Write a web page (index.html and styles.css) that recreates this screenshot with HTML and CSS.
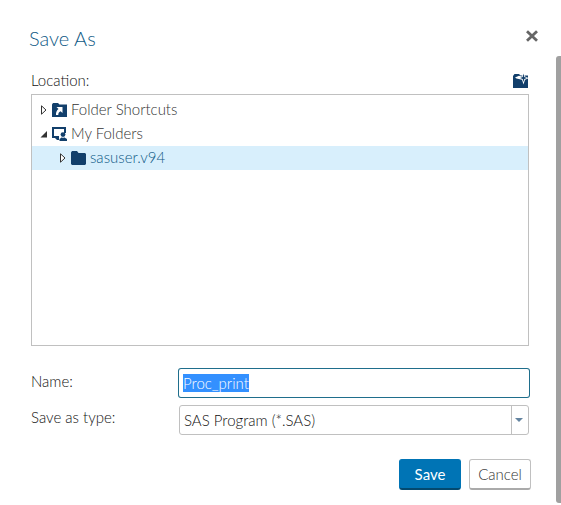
FILE: index.html
```
<!DOCTYPE html>
<html lang="en">

<head>
    <meta charset="UTF-8">
    <meta name="viewport" content="width=device-width, initial-scale=1.0">
    <title>Save As</title>
    <link rel="stylesheet" href="styles.css">
</head>

<body>
    <form class="dialog">
        <header class="dialog-header">
            <h1 class="dialog-title">Save As</h1>
            <button type="button" class="icon-btn close-btn" aria-label="Close">
                <svg width="14" height="12" viewBox="0 0 14 12">
                    <path d="M2 1.2L12 10.8M12 1.2L2 10.8" stroke="#666" stroke-width="2.8" />
                </svg>
            </button>
        </header>

        <div class="location-bar">
            <span id="location-label">Location:</span>
            <button type="button" class="icon-btn" aria-label="New folder">
                <svg width="15" height="15" viewBox="0 0 15 15">
                    <path d="M0 3L1.5 1H6L7.5 2.5H15V15H0Z" fill="#123f6b" />
                    <path d="M10.5 -1L12 3.5L16 5L12 6.8L10.5 11.5L9 6.8L3.5 5.4L2 4.4L6 2.8L9 3.5Z" fill="#fff" />
                    <path d="M10.5 0.5L11.3 4L14 5L11.3 6L10.5 9L9.7 6L7 5L9.7 4Z" fill="#123f6b" />
                </svg>
            </button>
        </div>

        <ul class="tree" role="tree" aria-labelledby="location-label">
            <li class="tree-row" role="treeitem" aria-level="1" aria-expanded="false">
                <svg class="arrow" width="8" height="10" viewBox="0 0 8 10">
                    <path d="M1.5 0.8L6 5L1.5 9.2Z" fill="#fff" stroke="#333" />
                </svg>
                <svg width="15" height="14" viewBox="0 0 15 14">
                    <path d="M0 1.5L1 0H6L7.5 1.5H15V14H0Z" fill="#123f6b" />
                    <path d="M4.5 4H10.5V10L8.6 8.2C6.8 9 6.3 10 6.3 12L4 12C3.8 9 4.8 7.4 6.5 6Z" fill="#fff" />
                </svg>
                <span>Folder Shortcuts</span>
            </li>
            <li class="tree-row" role="treeitem" aria-level="1" aria-expanded="true">
                <svg class="arrow" width="8" height="10" viewBox="0 0 8 10">
                    <path d="M7 2V8.5H0.5Z" fill="#333" />
                </svg>
                <svg width="15" height="14" viewBox="0 0 15 14">
                    <path d="M7 10H1V1H13V6" fill="none" stroke="#123f6b" stroke-width="2" />
                    <path d="M3 11H7V13H5Z" fill="#123f6b" />
                    <circle cx="11" cy="7.6" r="2.4" fill="#123f6b" />
                    <path d="M7.5 14V12L10 10.3L11 11.3L12 10.3L15 12V14Z" fill="#123f6b" />
                </svg>
                <span>My Folders</span>
            </li>
            <li class="tree-row nested selected" role="treeitem" aria-level="2" aria-selected="true">
                <svg class="arrow" width="8" height="10" viewBox="0 0 8 10">
                    <path d="M1.5 0.8L6 5L1.5 9.2Z" fill="#fff" stroke="#333" />
                </svg>
                <svg width="15" height="14" viewBox="0 0 15 14">
                    <path d="M0 1.5L1 0H6L7.5 2H14L15 3V13L14 14H1L0 13Z" fill="#123f6b" />
                </svg>
                <span>sasuser.v94</span>
            </li>
        </ul>

        <div class="fields">
            <label for="name">Name:</label>
            <input class="text-input" id="name" type="text" value="Proc_print" autocomplete="off" spellcheck="false">
            <label for="type">Save as type:</label>
            <div class="select-wrap">
                <select class="select" id="type">
                    <option>SAS Program (*.SAS)</option>
                </select>
            </div>
        </div>

        <footer class="actions">
            <button type="submit" class="btn btn-primary">Save</button>
            <button type="button" class="btn">Cancel</button>
        </footer>
    </form>
    <div class="scroll-thumb"></div>

    <script>
        const nameInput = document.querySelector('#name');
        nameInput.focus();
        nameInput.select();

        document.querySelector('.dialog').addEventListener('submit', (e) => e.preventDefault());
    </script>
</body>

</html>
```
FILE: styles.css
```
* {
    margin: 0;
    padding: 0;
    box-sizing: border-box;
}

body {
    display: flex;
    min-height: 100vh;
    background: #fff;
    color: #111;
    font-family: 'Lato', sans-serif;
    font-size: 15px;
    font-weight: 300;
    line-height: 20px;
}

button,
input,
select {
    font: inherit;
    color: inherit;
}

svg {
    display: block;
    flex: none;
}

.dialog {
    flex: 1;
    padding: 24px 25px 12px 31px;
}

.dialog-header {
    display: flex;
    justify-content: space-between;
    align-items: center;
    margin: 0 -8px 16px -2px;
}

.dialog-title {
    font-size: 20px;
    line-height: 28px;
    padding-bottom: 2px;
    font-weight: 300;
    color: #0f5a86;
}

.icon-btn {
    border: none;
    background: none;
    cursor: pointer;
}

.close-btn {
    padding-bottom: 6px;
}

.location-bar {
    display: flex;
    justify-content: space-between;
    align-items: center;
    margin-right: 3px;
    padding-bottom: 4px;
}

.tree {
    min-height: 252px;
    margin-right: 2px;
    padding: 3px 0;
    border: 1px solid #c0c0c0;
    list-style: none;
    color: #333;
}

.tree-row {
    display: flex;
    align-items: center;
    gap: 4px;
    height: 24px;
    padding-left: 8px;
}

.tree-row span {
    padding-bottom: 2px;
}

.tree-row.nested {
    padding-left: 27px;
}

.tree-row.selected {
    background: #d8effc;
    color: #0f5a86;
}

.fields {
    display: grid;
    grid-template-columns: 148px 1fr;
    row-gap: 8px;
    margin: 23px 2px 24px 0;
}

.fields label {
    padding-top: 2px;
}

.text-input {
    width: 100%;
    height: 28px;
    padding: 0 4px;
    border: none;
    border-radius: 2px;
    outline: none;
    box-shadow: 0 0 0 1px #1f6e8c;
}

.text-input::selection {
    background: #3390ff;
    color: #fff;
}

.select-wrap {
    position: relative;
}

.select {
    display: block;
    width: 100%;
    height: 30px;
    padding: 0 20px 0 4px;
    border: 1px solid #c0c0c0;
    border-radius: 3px;
    background: #fff;
    appearance: none;
}

/* Divider and arrow of the drop-down */
.select-wrap::before,
.select-wrap::after {
    content: '';
    position: absolute;
    pointer-events: none;
}

.select-wrap::before {
    top: 1px;
    bottom: 1px;
    right: 17px;
    border-left: 1px solid #c0c0c0;
}

.select-wrap::after {
    top: 13px;
    right: 6px;
    border: 4px solid transparent;
    border-top-color: #6484a0;
    border-bottom: none;
}

.actions {
    display: flex;
    justify-content: flex-end;
    gap: 8px;
}

.btn {
    width: 62px;
    height: 31px;
    border: 1px solid #c0c0c0;
    border-bottom: 2px solid #aaa;
    border-radius: 3px;
    background: #fff;
    color: #333;
    cursor: pointer;
}

.btn-primary {
    border-color: #0074b5;
    border-bottom-color: #03496f;
    background: #0074b5;
    color: #fff;
    font-weight: 400;
}

.scroll-thumb {
    flex: none;
    width: 5px;
    margin: 56px 0 2px;
    border-radius: 3px 0 0 3px;
    background: #a0a0a0;
}
```
